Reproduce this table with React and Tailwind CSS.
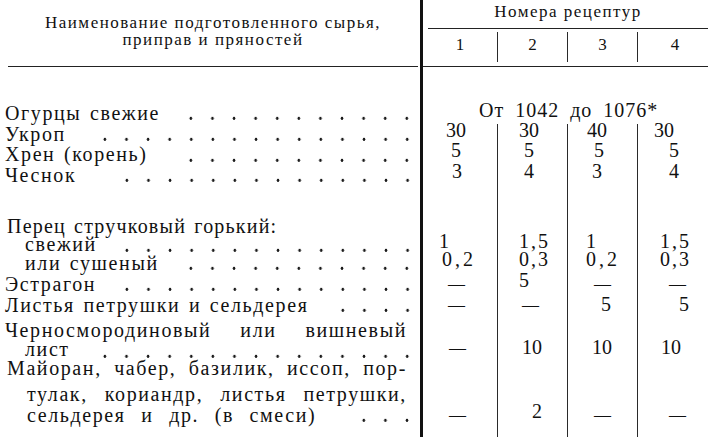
import React from 'react';

// column widths for the four recipe columns (dividers at 497, 567, 637)
const colCls = [
  'w-[74px] shrink-0',
  'w-[70px] shrink-0 border-l border-[#2a2a2a]',
  'w-[70px] shrink-0 border-l border-[#2a2a2a]',
  'w-[71px] shrink-0 border-l border-[#2a2a2a]',
];

// dot leader: n dots on a 21.6px grid, the last one at x≈407
const Leader = ({ n }) => (
  <span
    className="shrink-0 h-[20.7px] bg-[radial-gradient(circle,#1a1a1a_1.2px,transparent_1.7px)] bg-[length:21.6px_20.7px] bg-[position:right_0_top_5.4px] bg-repeat-x"
    style={{ width: n * 21.6 }}
  />
);

const Val = ({ v }) => {
  if (!v) return null;
  return (
    <span className={`block whitespace-nowrap ${v.flat ? 'leading-[20.7px]' : 'leading-[13px]'} ${v.pl} ${v.cls || ''}`}>
      {v.t}
    </span>
  );
};

const Row = ({ h, lh = 'leading-[20.7px]', children, vals, noDiv, wide }) => (
  <div className={`flex ${h}`}>
    <div className={`w-[423px] shrink-0 border-r-[3px] border-[#111] pr-[2px] flex justify-between ${lh} tracking-[1.6px] [word-spacing:2px] whitespace-nowrap`}>
      {children}
    </div>
    {wide ? (
      <div className="flex-1">{wide}</div>
    ) : noDiv ? (
      <div className="flex-1" />
    ) : (
      colCls.map((c, i) => (
        <div key={i} className={c}>
          <Val v={vals ? vals[i] : null} />
        </div>
      ))
    )}
  </div>
);

const dash = (pl, flat) => ({ t: '—', pl, flat, cls: 'text-[17px]' });
const num = (t, pl, cls) => ({ t, pl, cls });

export default function App() {
  return (
    <div className="w-[708px] h-[437px] overflow-hidden bg-white text-[#111] font-['Liberation_Serif','Times_New_Roman',serif]">
      {/* header */}
      <div className="flex h-[67px]">
        <div className="w-[423px] shrink-0 border-r-[3px] border-[#111]">
          <div className="h-full ml-[8px] mr-[2px] border-b-[1.5px] border-[#222] pt-[14px] text-center text-[17px] leading-[17px] tracking-[1.5px]">
            <div>Наименование подготовленного сырья,</div>
            <div>приправ и пряностей</div>
          </div>
        </div>
        <div className="flex-1 flex flex-col">
          <div className="h-[29px] ml-[5px] border-b border-[#222] text-center text-[17px] leading-[23px] tracking-[1.5px]">
            Номера рецептур
          </div>
          <div className="flex-1 border-b-[1.5px] border-[#222] pt-[3px] pb-[4px]">
            <div className="flex h-full text-[17px] leading-[26px] text-center">
              <div className="w-[74px] shrink-0">1</div>
              <div className="w-[70px] shrink-0 border-l border-[#2a2a2a]">2</div>
              <div className="w-[70px] shrink-0 border-l border-[#2a2a2a]">3</div>
              <div className="w-[71px] shrink-0 border-l border-[#2a2a2a] pl-[4px]">4</div>
            </div>
          </div>
        </div>
      </div>

      {/* body */}
      <div className="text-[20px]">
        <Row h="h-[36px]" noDiv />
        <Row
          h="h-[20.7px]"
          wide={
            <span className="block pl-[56px] leading-[14px] tracking-[1px] [word-spacing:5px] whitespace-nowrap">
              От 1042 до 1076*
            </span>
          }
        >
          <span className="pl-[5px]">Огурцы свежие</span>
          <Leader n={11} />
        </Row>
        <Row h="h-[20.7px]" vals={[num('30', 'pl-[23px]'), num('30', 'pl-[21px]'), num('40', 'pl-[19px]'), num('30', 'pl-[16px]')]}>
          <span className="pl-[5px]">Укроп</span>
          <Leader n={15} />
        </Row>
        <Row h="h-[20.7px]" vals={[num('5', 'pl-[28px]'), num('5', 'pl-[26px]'), num('5', 'pl-[26px]'), num('5', 'pl-[31px]')]}>
          <span className="pl-[5px]">Хрен (корень)</span>
          <Leader n={11} />
        </Row>
        <Row h="h-[20.7px]" vals={[num('3', 'pl-[29px]'), num('4', 'pl-[26px]'), num('3', 'pl-[24px]'), num('4', 'pl-[31px]')]}>
          <span className="pl-[5px]">Чеснок</span>
          <Leader n={14} />
        </Row>
        <Row h="h-[31.2px]" />

        <Row h="h-[18px]" lh="leading-[18px]">
          <span className="pl-[7px] tracking-[1.2px]">Перец стручковый горький:</span>
        </Row>
        <Row
          h="h-[18px]"
          lh="leading-[18px]"
          vals={[num('1', 'pl-[16px]'), num('1,5', 'pl-[21px]', 'tracking-[2px]'), num('1', 'pl-[18px]'), num('1,5', 'pl-[22px]', 'tracking-[2px]')]}
        >
          <span className="pl-[25px]">свежий</span>
          <Leader n={14} />
        </Row>
        <Row
          h="h-[21px]"
          vals={[
            num('0,2', 'pl-[19px]', 'tracking-[3px]'),
            num('0,3', 'pl-[21px]', 'tracking-[2px]'),
            num('0,2', 'pl-[18px]', 'tracking-[3px]'),
            num('0,3', 'pl-[22px]', 'tracking-[2px]'),
          ]}
        >
          <span className="pl-[25px]">или сушеный</span>
          <Leader n={11} />
        </Row>
        <Row h="h-[20.7px]" vals={[dash('pl-[25px]', true), num('5', 'pl-[21px]'), dash('pl-[26px]', true), dash('pl-[31px]', true)]}>
          <span className="pl-[5px]">Эстрагон</span>
          <Leader n={14} />
        </Row>
        <Row h="h-[25.3px]" vals={[dash('pl-[25px]', true), dash('pl-[24px]', true), num('5', 'pl-[33px]', 'leading-[18px]'), num('5', 'pl-[41px]', 'leading-[18px]')]}>
          <span className="pl-[5px]">Листья петрушки и сельдерея</span>
          <Leader n={4} />
        </Row>

        <Row h="h-[20.7px]">
          <span className="flex flex-1 justify-between pl-[5px] pr-[11px]">
            <span>Черносмородиновый</span>
            <span>или</span>
            <span>вишневый</span>
          </span>
        </Row>
        <Row h="h-[17.3px]" lh="leading-[17.3px]" vals={[dash('pl-[26px]'), num('10', 'pl-[24px]'), num('10', 'pl-[24px]'), num('10', 'pl-[23px]')]}>
          <span className="pl-[25px]">лист</span>
          <Leader n={15} />
        </Row>
        <Row h="h-[26.5px]">
          <span className="flex flex-1 justify-between pl-[7px] pr-[11px]">
            <span>Майоран,</span>
            <span>чабер,</span>
            <span>базилик,</span>
            <span>иссоп,</span>
            <span>пор-</span>
          </span>
        </Row>
        <Row h="h-[20.7px]">
          <span className="flex flex-1 justify-between pl-[27px] pr-[11px]">
            <span>тулак,</span>
            <span>кориандр,</span>
            <span>листья</span>
            <span>петрушки,</span>
          </span>
        </Row>
        <Row h="h-[20.7px]" vals={[dash('pl-[26px]', true), num('2', 'pl-[34px]'), dash('pl-[26px]', true), dash('pl-[31px]', true)]}>
          <span className="pl-[27px] [word-spacing:9px]">сельдерея и др. (в смеси)</span>
          <Leader n={3} />
        </Row>
        <Row h="h-[20px]" />
      </div>
    </div>
  );
}
